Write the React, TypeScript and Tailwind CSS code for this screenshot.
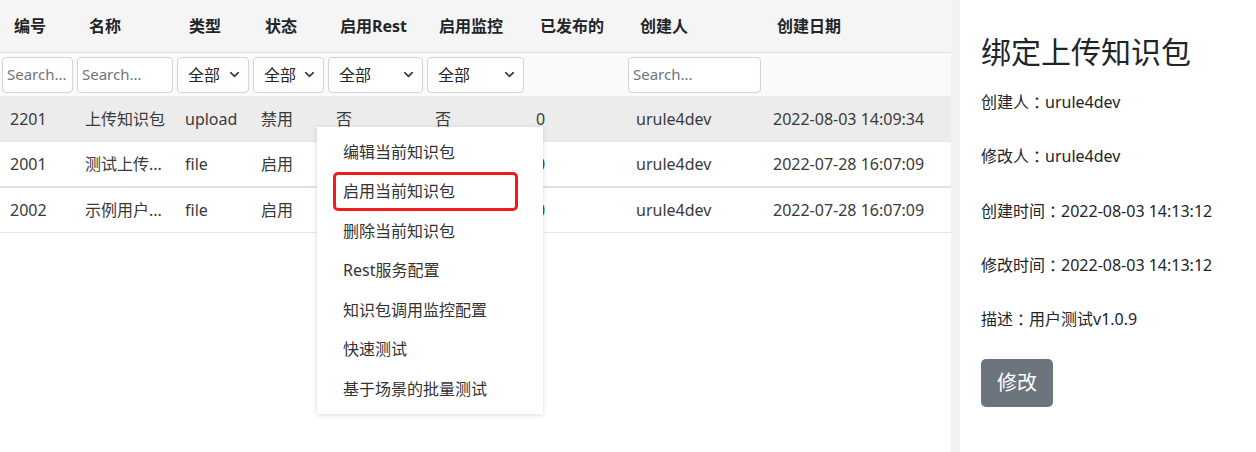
import { ChevronDown } from "lucide-react"

const cols = [75, 100, 76, 75, 99, 101, 100, 137, 188]
const headers = ["编号", "名称", "类型", "状态", "启用Rest", "启用监控", "已发布的", "创建人", "创建日期"]

const rows = [
  ["2201", "上传知识包", "upload", "禁用", "否", "否", "0", "urule4dev", "2022-08-03 14:09:34"],
  ["2001", "测试上传...", "file", "启用", "否", "否", "0", "urule4dev", "2022-07-28 16:07:09"],
  ["2002", "示例用户...", "file", "启用", "否", "否", "0", "urule4dev", "2022-07-28 16:07:09"],
]

const menuItems = ["编辑当前知识包", "启用当前知识包", "删除当前知识包", "Rest服务配置", "知识包调用监控配置", "快速测试", "基于场景的批量测试"]

const details = [
  ["创建人", "urule4dev"],
  ["修改人", "urule4dev"],
  ["创建时间", "2022-08-03 14:13:12"],
  ["修改时间", "2022-08-03 14:13:12"],
  ["描述", "用户测试v1.0.9"],
]

function SearchBox() {
  return (
    <div className="flex h-[36px] w-full items-center overflow-hidden whitespace-nowrap rounded-[4px] border border-[#ced4da] bg-white px-[4px] text-[15px] text-[#6c757d]">
      Search...
    </div>
  )
}

function SelectBox() {
  return (
    <div className="flex h-[36px] w-full items-center justify-between rounded-[4px] border border-[#ced4da] bg-white pl-[10px] pr-[6px] text-[16px] text-[#212529]">
      <span>全部</span>
      <ChevronDown size={15} strokeWidth={2.6} className="text-[#343a40]" />
    </div>
  )
}

const filters = ["search", "search", "select", "select", "select", "select", "", "search", ""]

export default function App() {
  return (
    <div
      className="flex h-[452px] w-[1256px] overflow-hidden bg-white"
      style={{ fontFamily: '"Noto Sans", "Noto Sans CJK SC", sans-serif' }}
    >
      <div className="relative w-[951px] shrink-0">
        <div className="flex h-[53px] border-b border-[#dee2e6] bg-[#f5f5f5]">
          {headers.map((h, i) => (
            <div key={h} style={{ width: cols[i] }} className="flex items-center pl-[14px] text-[16px] font-bold text-[#212529]">
              {h}
            </div>
          ))}
        </div>
        <div className="flex h-[43px] items-center bg-[#fafafa]">
          {filters.map((f, i) => (
            <div key={i} style={{ width: cols[i] }} className="px-[2px]">
              {f === "search" ? <SearchBox /> : f === "select" ? <SelectBox /> : null}
            </div>
          ))}
        </div>
        {rows.map((r, ri) => (
          <div
            key={ri}
            className={`flex items-center text-[16px] text-[#3a3a3a] ${
              ri === 0 ? "h-[46px] border-b border-[#e4e4e4] bg-[#ececec]" : ri === 1 ? "h-[46px] border-b-2 border-[#dee2e6]" : "h-[45px] border-b border-[#e4e6ea]"
            }`}
          >
            {r.map((c, i) => (
              <div key={i} style={{ width: cols[i] }} className="whitespace-nowrap pl-[10px]">
                {c}
              </div>
            ))}
          </div>
        ))}

        <div className="absolute left-[317px] top-[127px] w-[226px] bg-white py-[5px] shadow-[0_1px_5px_rgba(0,0,0,0.15)]">
          {menuItems.map((m, i) => (
            <div key={m} className="relative flex h-[39.5px] items-center pl-[26px] text-[16px] text-[#333]">
              {i === 1 && <span className="absolute inset-y-0 left-[16px] w-[185px] rounded-[5px] border-[3px] border-[#f01c1c]" />}
              <span className="relative">{m}</span>
            </div>
          ))}
        </div>
      </div>

      <div className="w-[9px] shrink-0 bg-[#f2f2f4]" />

      <div className="flex-1 pl-[21px] pt-[34px] text-[#212529]">
        <div className="text-[30px] leading-[36px]">绑定上传知识包</div>
        <div className="mt-[20px] flex flex-col gap-[30.25px] text-[16px]">
          {details.map(([k, v]) => (
            <div key={k} className="flex h-[24px] items-center whitespace-nowrap">
              {k}
              <span style={{ fontFamily: '"Noto Sans CJK TC", sans-serif' }}>：</span>
              {v}
            </div>
          ))}
        </div>
        <button className="mt-[28px] h-[48px] w-[72px] rounded-[5px] bg-[#6c757d] text-[20px] text-white">修改</button>
      </div>
    </div>
  )
}
